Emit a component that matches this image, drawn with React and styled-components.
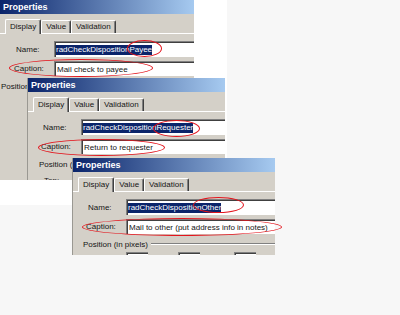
import React from "react"
import styled, { createGlobalStyle } from "styled-components"

const GlobalStyle = createGlobalStyle`
  html, body {
    margin: 0;
    padding: 0;
    background: #f7f7f7;
  }
  body {
    font-family: "Liberation Sans", Arial, sans-serif;
  }
`

const Canvas = styled.div`
  position: relative;
  width: 400px;
  height: 315px;
  overflow: hidden;
  background: #f7f7f7;
`

// one pasted screenshot on the page
const Shot = styled.div`
  position: absolute;
  left: ${(p) => p.$x}px;
  top: ${(p) => p.$y}px;
  width: ${(p) => p.$w}px;
  height: ${(p) => p.$h}px;
  background: ${(p) => (p.$mat ? "#fff" : "transparent")};
`

const Dialog = styled.div`
  width: ${(p) => p.$w}px;
  height: ${(p) => p.$h}px;
  box-sizing: border-box;
  background: #d4d0c8;
  overflow: hidden;
  display: flex;
  flex-direction: column;
  border-left: ${(p) => (p.$edge ? "1px solid #9a9892" : "none")};
  font-family: "Liberation Sans", Arial, sans-serif;
  font-size: 8px;
  color: #151515;
`

const TitleBar = styled.div`
  flex: none;
  height: 14px;
  padding-left: 3px;
  background: linear-gradient(to right, #0a246a, #a6caf0);
  color: #fff;
  font-weight: bold;
  font-size: 9px;
  line-height: 14px;
`

const TabStrip = styled.div`
  flex: none;
  display: flex;
  align-items: flex-end;
  height: 20px;
  box-sizing: border-box;
  padding-left: 5px;
  border-bottom: 1px solid #fff;
`

const Tab = styled.div`
  position: relative;
  z-index: ${(p) => (p.$active ? 1 : 0)};
  height: ${(p) => (p.$active ? 15 : 13)}px;
  margin-bottom: ${(p) => (p.$active ? -1 : 0)}px;
  box-sizing: border-box;
  padding: 0 4px;
  background: #d4d0c8;
  border-top: 1px solid #fff;
  border-left: 1px solid #fff;
  border-right: 1px solid #404040;
  box-shadow: inset -1px 0 #808080;
  border-radius: 2px 2px 0 0;
  line-height: ${(p) => (p.$active ? 14 : 12)}px;
  white-space: nowrap;
`

const Panel = styled.div`
  display: flex;
  flex-direction: column;
  padding-top: 7px;
`

const FieldRow = styled.div`
  display: flex;
  align-items: stretch;
  height: ${(p) => p.$h}px;
  margin-bottom: 4px;
`

const Label = styled.span`
  flex: 0 0 ${(p) => p.$w}px;
  box-sizing: border-box;
  padding-left: ${(p) => p.$indent}px;
  display: flex;
  align-items: center;
  white-space: nowrap;
`

const Field = styled.div`
  flex: 1;
  display: flex;
  align-items: center;
  padding-left: ${(p) => p.$pad}px;
  background: #fff;
  border-top: 1px solid #808080;
  border-left: 1px solid #808080;
  box-shadow: inset 1px 1px #404040;
  white-space: nowrap;
  overflow: hidden;
`

const Selected = styled.span`
  background: #0a246a;
  color: #fff;
  line-height: 10px;
`

const GroupRow = styled.div`
  display: flex;
  align-items: center;
  gap: 3px;
  height: 12px;
  padding-left: ${(p) => p.$indent}px;
  white-space: nowrap;

  &::after {
    content: "";
    flex: 1;
    border-top: 1px solid #808080;
    border-bottom: 1px solid #fff;
  }
`

const BoxRow = styled.div`
  display: flex;
  align-items: center;
  height: 16px;
  margin-top: 2px;
  padding-left: 16px;
`

const SmallLabel = styled.span`
  flex: 0 0 ${(p) => p.$w}px;
  box-sizing: border-box;
  padding-left: ${(p) => p.$pad ?? 0}px;
`

const SmallBox = styled.div`
  flex: none;
  width: 22px;
  height: 16px;
  box-sizing: border-box;
  background: #fff;
  border-top: 1px solid #808080;
  border-left: 1px solid #808080;
  box-shadow: inset 1px 1px #404040;
`

// red hand-drawn marks laid over the screenshot
const Ring = styled.span`
  position: absolute;
  left: ${(p) => p.$x}px;
  top: ${(p) => p.$y}px;
  width: ${(p) => p.$w}px;
  height: ${(p) => p.$h}px;
  box-sizing: border-box;
  border: 1.6px solid #e3141c;
  border-radius: 50%;
  pointer-events: none;
`

const shots = [
  {
    x: 0,
    y: 0,
    w: 194,
    h: 180,
    mat: { w: 227, h: 205 },
    suffix: "Payee",
    caption: "Mail check to payee",
    groupIndent: 1,
    boxes: false,
    rings: [
      { x: 127, y: 40, w: 35, h: 17 },
      { x: 9, y: 59, w: 144, h: 18 },
    ],
  },
  {
    x: 27,
    y: 78,
    w: 198,
    h: 102,
    edge: true,
    suffix: "Requester",
    caption: "Return to requester",
    groupIndent: 11,
    boxes: true,
    rings: [
      { x: 126, y: 42, w: 47, h: 17 },
      { x: 11, y: 61, w: 127, h: 17 },
    ],
  },
  {
    x: 72,
    y: 158,
    w: 203,
    h: 97,
    edge: true,
    suffix: "Other",
    caption: "Mail to other (put address info in notes)",
    groupIndent: 10,
    boxes: true,
    rings: [
      { x: 121, y: 39, w: 51, h: 16 },
      { x: 10, y: 60, w: 200, h: 18 },
    ],
  },
]

const tabs = ["Display", "Value", "Validation"]

const PropertiesShot = ({ shot }) => {
  const sw = shot.mat ? shot.mat.w : shot.w
  const sh = shot.mat ? shot.mat.h : shot.h
  const off = shot.edge ? 1 : 0

  return (
    <Shot $x={shot.x} $y={shot.y} $w={sw} $h={sh} $mat={!!shot.mat}>
      <Dialog $w={shot.w} $h={shot.h} $edge={shot.edge}>
        <TitleBar>Properties</TitleBar>
        <TabStrip>
          {tabs.map((t, i) => (
            <Tab key={t} $active={i === 0}>
              {t}
            </Tab>
          ))}
        </TabStrip>
        <Panel>
          <FieldRow $h={16}>
            <Label $w={54 - off} $indent={16 - off}>
              Name:
            </Label>
            <Field $pad={1}>
              <Selected>radCheckDisposition{shot.suffix}</Selected>
            </Field>
          </FieldRow>
          <FieldRow $h={15}>
            <Label $w={54 - off} $indent={14 - off}>
              Caption:
            </Label>
            <Field $pad={2}>{shot.caption}</Field>
          </FieldRow>
          <GroupRow $indent={shot.groupIndent}>Position (in pixels)</GroupRow>
          {shot.boxes && (
            <BoxRow>
              <SmallLabel $w={37}>Top:</SmallLabel>
              <SmallBox />
              <SmallLabel $w={30} $pad={5}>
                Left:
              </SmallLabel>
              <SmallBox />
              <SmallLabel $w={34} $pad={5}>
                Width:
              </SmallLabel>
              <SmallBox />
            </BoxRow>
          )}
        </Panel>
      </Dialog>
      {shot.rings.map((r, i) => (
        <Ring key={i} $x={r.x} $y={r.y} $w={r.w} $h={r.h} />
      ))}
    </Shot>
  )
}

export default function App() {
  return (
    <>
      <GlobalStyle />
      <Canvas>
        {shots.map((s) => (
          <PropertiesShot key={s.suffix} shot={s} />
        ))}
      </Canvas>
    </>
  )
}
